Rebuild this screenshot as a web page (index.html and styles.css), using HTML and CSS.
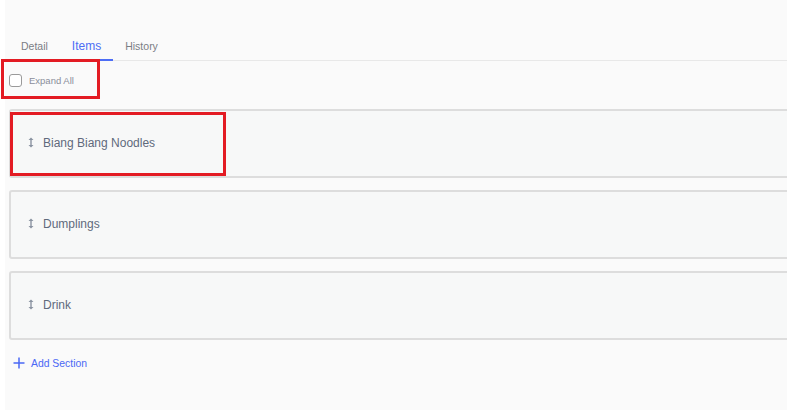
FILE: index.html
```html
<!DOCTYPE html>
<html>
<head>
<meta charset="utf-8">
<link rel="stylesheet" href="styles.css">
</head>
<body>
<div class="page">
  <div class="tabs">
    <div class="tab">Detail</div>
    <div class="tab active">Items</div>
    <div class="tab">History</div>
  </div>
  <label class="expand">
    <span class="checkbox"></span>
    <span class="expand-label">Expand All</span>
  </label>
  <div class="sections">
    <div class="card">
      <span class="drag"><svg width="6" height="11" viewBox="0 0 6 11"><path d="M3 0.5 L5.5 3 H0.5 Z M3 10.5 L5.5 8 H0.5 Z" fill="#8a93a1"/><rect x="2.3" y="2" width="1.4" height="7" fill="#8a93a1"/></svg></span>
      <span class="title">Biang Biang Noodles</span>
    </div>
    <div class="card">
      <span class="drag"><svg width="6" height="11" viewBox="0 0 6 11"><path d="M3 0.5 L5.5 3 H0.5 Z M3 10.5 L5.5 8 H0.5 Z" fill="#8a93a1"/><rect x="2.3" y="2" width="1.4" height="7" fill="#8a93a1"/></svg></span>
      <span class="title">Dumplings</span>
    </div>
    <div class="card">
      <span class="drag"><svg width="6" height="11" viewBox="0 0 6 11"><path d="M3 0.5 L5.5 3 H0.5 Z M3 10.5 L5.5 8 H0.5 Z" fill="#8a93a1"/><rect x="2.3" y="2" width="1.4" height="7" fill="#8a93a1"/></svg></span>
      <span class="title">Drink</span>
    </div>
  </div>
  <div class="add">
    <svg width="12" height="12" viewBox="0 0 12 12"><path d="M6 0.5 V11.5 M0.5 6 H11.5" stroke="#4a68f5" stroke-width="1.5"/></svg>
    <span>Add Section</span>
  </div>
</div>
<div class="mark mark-expand"></div>
<div class="mark mark-title"></div>
</body>
</html>
```

FILE: styles.css
```css
html, body {
  margin: 0;
  padding: 0;
  background: #ffffff;
  font-family: "Liberation Sans", Arial, sans-serif;
}

body {
  position: relative;
  overflow: hidden;
}

.page {
  margin-left: 5px;
  padding: 31px 0 0 4px;
  min-height: 379px;
  background: #fafafa;
  overflow: hidden;
}

.tabs {
  display: flex;
  border-bottom: 1px solid #e8e8e8;
  margin-left: -9px;
  padding-left: 9px;
}

.tab {
  padding: 8px 12px 6px;
  font-size: 10.5px;
  line-height: 14px;
  color: #7a7d84;
  border-bottom: 2px solid transparent;
  margin-bottom: -1px;
}

.tab.active {
  color: #4d6df5;
  font-size: 12px;
  border-bottom-color: #4d6df5;
}

.expand {
  display: flex;
  align-items: center;
  gap: 7px;
  margin-top: 13px;
  height: 13px;
}

.checkbox {
  width: 11px;
  height: 11px;
  border: 1px solid #9a9a9a;
  border-radius: 3px;
  background: #ffffff;
}

.expand-label {
  font-size: 9.5px;
  color: #8a8e9a;
}

.sections {
  display: flex;
  flex-direction: column;
  gap: 12px;
  margin-top: 22px;
  margin-right: -20px;
}

.card {
  height: 63px;
  border: 2px solid #dddddd;
  border-radius: 3px;
  background: #f7f8f8;
  display: flex;
  align-items: center;
  padding-left: 17px;
  padding-bottom: 2px;
  gap: 9px;
}

.drag {
  display: flex;
  width: 6px;
}

.title {
  font-size: 12px;
  color: #5f6a7c;
}

.add {
  display: flex;
  align-items: center;
  gap: 6px;
  margin-top: 17px;
  margin-left: 4px;
  font-size: 10.4px;
  color: #4a68f5;
}

.mark {
  position: absolute;
  border: 3px solid #e31b23;
}

.mark-expand {
  left: 1px;
  top: 59px;
  width: 93px;
  height: 34px;
}

.mark-title {
  left: 10px;
  top: 112px;
  width: 210px;
  height: 58px;
}
```
